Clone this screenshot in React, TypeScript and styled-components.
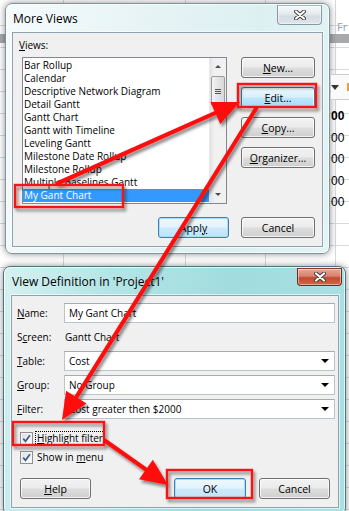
import React from 'react';
import styled, { createGlobalStyle, css } from 'styled-components';

const GlobalStyle = createGlobalStyle`
  html, body {
    margin: 0;
    padding: 0;
    background: #fff;
  }
  body {
    font-family: "Open Sans", "Noto Sans", "Liberation Sans", sans-serif;
    font-size: 10px;
    color: #000;
    overflow: hidden;
  }
`;

const gridLine = '#d6d9dd';

const Page = styled.div`
  position: relative;
  width: 349px;
  height: 511px;
  overflow: hidden;
  background:
    linear-gradient(#a7a9ab, #a7a9ab) 0 34px / 100% 9px no-repeat,
    linear-gradient(${gridLine}, ${gridLine}) 63px 0 / 1px 100% no-repeat,
    linear-gradient(${gridLine}, ${gridLine}) 185px 0 / 1px 100% no-repeat,
    linear-gradient(${gridLine}, ${gridLine}) 265px 0 / 1px 100% no-repeat,
    linear-gradient(${gridLine}, ${gridLine}) 335px 0 / 1px 100% no-repeat,
    repeating-linear-gradient(to bottom, transparent 0 21px, ${gridLine} 21px 22px) 0 4px / 100% 100%,
    #fff;
`;

const TopRow = styled.div`
  display: flex;
  align-items: flex-start;
  padding: 3px 0 0 5px;
`;

const SheetEdge = styled.div`
  flex: 1;
  display: flex;
  flex-direction: column;
  padding-left: 1px;
`;

const SheetHead = styled.div`
  height: 31px;
  display: flex;
  align-items: flex-end;
  padding-left: 6px;
  color: #8ea0b8;
  font-size: 11px;
  box-sizing: border-box;
`;

const SheetGap = styled.div<{ $h: number }>`
  height: ${p => p.$h}px;
`;

const SheetHeader = styled.div`
  height: 26px;
  border-top: 1px solid #c9ccd0;
  border-bottom: 1px solid #c9ccd0;
  background: #fafafa;
  display: flex;
  align-items: center;
  box-sizing: border-box;
  gap: 8px;
`;

const HeaderArrow = styled.span`
  width: 0;
  height: 0;
  border-left: 4px solid transparent;
  border-right: 4px solid transparent;
  border-top: 5px solid #333;
`;

const HeaderMark = styled.span`
  width: 2px;
  height: 8px;
  background: #e8a040;
`;

const SheetCell = styled.div<{ $bold?: boolean }>`
  height: 21.5px;
  line-height: 21.5px;
  font-size: 12px;
  font-weight: ${p => (p.$bold ? 700 : 400)};
  color: #000;
  font-family: "Liberation Sans", sans-serif;
`;

const Window = styled.div<{ $active?: boolean; $width: number; $pad: string }>`
  width: ${p => p.$width}px;
  box-sizing: border-box;
  border: 1px solid ${p => (p.$active ? '#4f7380' : '#7d939e')};
  border-radius: 7px;
  padding: ${p => p.$pad};
  box-shadow: 0 0 7px rgba(0, 0, 0, 0.45), inset 0 0 0 1px rgba(255, 255, 255, 0.7);
  background: ${p =>
    p.$active
      ? 'linear-gradient(100deg, #d6f1f1 0%, #b4e5e6 28%, #a2dcdf 60%, #a9e1e3 100%)'
      : 'linear-gradient(100deg, #f6fbfc 0%, #e8f4f6 35%, #dcf0f2 70%, #e4f3f5 100%)'};
`;

const Dialog2Wrap = styled.div`
  padding: 12px 0 0 3px;
`;

const TitleBar = styled.div`
  height: 28px;
  display: flex;
  justify-content: space-between;
  align-items: flex-start;
`;

const Title = styled.div`
  font-size: 12px;
  margin-top: 6px;
  margin-left: 1px;
  color: #000;
  white-space: nowrap;
`;

const CloseButton = styled.div<{ $red?: boolean; $right: number; $h: number }>`
  width: 45px;
  height: ${p => p.$h}px;
  margin-top: 1px;
  margin-right: ${p => p.$right}px;
  box-sizing: border-box;
  border-radius: 0 0 4px 4px;
  display: flex;
  align-items: center;
  justify-content: center;
  border: 1px solid ${p => (p.$red ? '#6a2b20' : '#8a98a3')};
  border-top-color: ${p => (p.$red ? '#8a3a2a' : '#a8b4bc')};
  box-shadow: inset 0 0 0 1px rgba(255, 255, 255, 0.45);
  background: ${p =>
    p.$red
      ? 'linear-gradient(to bottom, #e6a897 0%, #d7806b 45%, #c24a32 55%, #d0654b 100%)'
      : 'linear-gradient(to bottom, #f6f9fa 0%, #e4eaed 45%, #d4dde2 55%, #dde5ea 100%)'};
`;

const Panel = styled.div<{ $pad: string }>`
  background: #f0f0f0;
  border: 1px solid #8fa2ae;
  box-shadow: 0 0 0 1px rgba(255, 255, 255, 0.6);
  padding: ${p => p.$pad};
  display: flex;
  flex-direction: column;
`;

const U = styled.span`
  text-decoration: underline;
  text-underline-offset: 1px;
`;

const FieldLabel = styled.div`
  height: 14px;
  line-height: 14px;
  margin-bottom: 5px;
`;

const MainRow = styled.div`
  display: flex;
  align-items: flex-start;
`;

const ListBox = styled.div`
  margin-left: 3px;
  width: 205px;
  height: 147px;
  box-sizing: border-box;
  border: 1px solid #828790;
  background: #fff;
  display: flex;
`;

const ListItems = styled.div`
  flex: 1;
  padding-top: 1px;
  overflow: hidden;
`;

const ListItem = styled.div<{ $selected?: boolean }>`
  height: 13px;
  line-height: 13px;
  padding-left: 1px;
  white-space: nowrap;
  background: ${p => (p.$selected ? '#3399ff' : 'transparent')};
  color: ${p => (p.$selected ? '#fff' : '#000')};
`;

const ScrollBar = styled.div`
  width: 16px;
  display: flex;
  flex-direction: column;
  background: linear-gradient(to right, #e3e3e3, #f1f1f1 30%, #f1f1f1);
  border-left: 1px solid #e8e8e8;
`;

const ScrollArrow = styled.div`
  height: 17px;
  display: flex;
  align-items: center;
  justify-content: center;
`;

const ArrowUp = styled.span`
  width: 0;
  height: 0;
  border-left: 3px solid transparent;
  border-right: 3px solid transparent;
  border-bottom: 3px solid #4d4d4d;
`;

const ArrowDown = styled.span`
  width: 0;
  height: 0;
  border-left: 3px solid transparent;
  border-right: 3px solid transparent;
  border-top: 3px solid #4d4d4d;
`;

const ScrollThumb = styled.div`
  margin: 1px 1px 0;
  height: 30px;
  box-sizing: border-box;
  border: 1px solid #9a9a9a;
  border-radius: 2px;
  background: linear-gradient(to right, #f3f3f3, #e4e4e4 50%, #d8d8d8);
  display: flex;
  flex-direction: column;
  align-items: center;
  justify-content: center;
  gap: 1px;
`;

const Grip = styled.span`
  width: 6px;
  height: 1px;
  background: #555;
`;

const ScrollTrack = styled.div`
  flex: 1;
`;

const ButtonColumn = styled.div`
  margin-left: 14px;
  width: 74px;
  display: flex;
  flex-direction: column;
  gap: 9px;
`;

const Button = styled.div<{ $blue?: 'hover' | 'default'; $w?: number; $ml?: number }>`
  box-sizing: border-box;
  height: 21px;
  width: ${p => (p.$w ? `${p.$w}px` : '100%')};
  margin-left: ${p => p.$ml ?? 0}px;
  border: 1px solid #707070;
  border-radius: 3px;
  display: flex;
  align-items: center;
  justify-content: center;
  font-size: 10.5px;
  box-shadow: inset 0 0 0 1px rgba(255, 255, 255, 0.75);
  background: linear-gradient(to bottom, #f2f2f2 0%, #ebebeb 48%, #dddddd 52%, #cfcfcf 100%);
  ${p =>
    p.$blue === 'hover' &&
    css`
      border-color: #3c7fb1;
      background: linear-gradient(to bottom, #eaf6fd 0%, #d9f0fc 48%, #bee6fd 52%, #a7d9f5 100%);
    `}
  ${p =>
    p.$blue === 'default' &&
    css`
      border-color: #3c7fb1;
      box-shadow: inset 0 0 0 1px #a9dcf6;
      background: linear-gradient(to bottom, #eef8fd 0%, #e2f3fc 48%, #cdeafb 52%, #c0e3f7 100%);
    `}
`;

const Footer = styled.div<{ $gap: number; $top: number }>`
  display: flex;
  justify-content: flex-end;
  gap: ${p => p.$gap}px;
  margin-top: ${p => p.$top}px;
`;

const FormGrid = styled.div`
  display: grid;
  grid-template-columns: 52px 1fr;
  row-gap: 4px;
  align-items: center;
`;

const FormLabel = styled.div`
  height: 20px;
  line-height: 20px;
  padding-left: 5px;
`;

const fieldBox = css`
  height: 20px;
  box-sizing: border-box;
  background: #fff;
  border: 1px solid #bcc3cb;
  border-top-color: #a3abb4;
  display: flex;
  align-items: center;
  padding-left: 4px;
`;

const TextBox = styled.div`
  ${fieldBox}
`;

const ComboBox = styled.div`
  ${fieldBox}
  justify-content: space-between;
  padding-right: 5px;
`;

const ComboArrow = styled.span`
  width: 0;
  height: 0;
  border-left: 4px solid transparent;
  border-right: 4px solid transparent;
  border-top: 4px solid #000;
`;

const PlainValue = styled.div`
  height: 20px;
  line-height: 20px;
  padding-left: 1px;
`;

const Checks = styled.div`
  margin-top: 10px;
  padding-left: 8px;
  display: flex;
  flex-direction: column;
`;

const CheckRow = styled.div`
  height: 19px;
  display: flex;
  align-items: center;
  gap: 3px;
`;

const CheckBox = styled.span`
  width: 13px;
  height: 13px;
  box-sizing: border-box;
  border: 1px solid #8e8f8f;
  background: linear-gradient(135deg, #dcdcdc, #f6f6f6 70%, #fff);
  box-shadow: inset 0 0 0 1px #f4f4f4;
  display: flex;
  align-items: center;
  justify-content: center;
`;

const CheckLabel = styled.span<{ $focused?: boolean }>`
  padding: 0 1px;
  line-height: 13px;
  outline: ${p => (p.$focused ? '1px dotted #000' : 'none')};
`;

const DialogButtons = styled.div`
  display: flex;
  align-items: center;
  margin-top: 11px;
  padding: 0 5px 0 8px;
`;

const Spacer = styled.div`
  flex: 1;
`;

const Overlay = styled.svg`
  position: absolute;
  left: 0;
  top: 0;
  pointer-events: none;
`;

const views = [
  'Bar Rollup',
  'Calendar',
  'Descriptive Network Diagram',
  'Detail Gantt',
  'Gantt Chart',
  'Gantt with Timeline',
  'Leveling Gantt',
  'Milestone Date Rollup',
  'Milestone Rollup',
  'Multiple Baselines Gantt',
  'My Gant Chart',
];

const CloseGlyph = () => (
  <svg width="12" height="10" viewBox="0 0 12 10">
    <path d="M2 1.5 L10 8.5 M10 1.5 L2 8.5" stroke="#3a3a3a" strokeWidth="4" strokeLinecap="round" />
    <path d="M2 1.5 L10 8.5 M10 1.5 L2 8.5" stroke="#fff" strokeWidth="2.2" strokeLinecap="round" />
  </svg>
);

const CheckMark = () => (
  <svg width="9" height="9" viewBox="0 0 9 9">
    <path d="M1.2 4.6 L3.5 7.3 L7.9 1.2" fill="none" stroke="#3f5c98" strokeWidth="1.7" />
  </svg>
);

// arrow from tail to tip with a filled head
function arrowParts(x1: number, y1: number, x2: number, y2: number, len = 27, half = 12) {
  const dx = x2 - x1;
  const dy = y2 - y1;
  const d = Math.hypot(dx, dy);
  const ux = dx / d;
  const uy = dy / d;
  const bx = x2 - ux * len;
  const by = y2 - uy * len;
  const head = `${x2},${y2} ${bx - uy * half},${by + ux * half} ${bx + uy * half},${by - ux * half}`;
  return { line: { x1, y1, x2: bx + ux * 2, y2: by + uy * 2 }, head };
}

const arrows = [
  arrowParts(56, 184, 240, 102),
  arrowParts(257, 107, 62, 420),
  arrowParts(104, 440, 168, 485),
];

const boxes = [
  { x: 238, y: 84, w: 78, h: 23 },
  { x: 15, y: 185, w: 108, h: 22 },
  { x: 13, y: 422, w: 91, h: 23 },
  { x: 167, y: 470, w: 85, h: 28 },
];

const App: React.FC = () => {
  return (
    <>
      <GlobalStyle />
      <Page>
        <TopRow>
          <Window $width={325} $pad="0 6px 6px">
            <TitleBar>
              <Title>More Views</Title>
              <CloseButton $right={1} $h={20}>
                <CloseGlyph />
              </CloseButton>
            </TitleBar>
            <Panel $pad="5px 7px 8px 6px">
              <FieldLabel>
                <U>V</U>iews:
              </FieldLabel>
              <MainRow>
                <ListBox>
                  <ListItems>
                    {views.map(v => (
                      <ListItem key={v} $selected={v === 'My Gant Chart'}>
                        {v}
                      </ListItem>
                    ))}
                  </ListItems>
                  <ScrollBar>
                    <ScrollArrow>
                      <ArrowUp />
                    </ScrollArrow>
                    <ScrollThumb>
                      <Grip />
                      <Grip />
                      <Grip />
                    </ScrollThumb>
                    <ScrollTrack />
                    <ScrollArrow>
                      <ArrowDown />
                    </ScrollArrow>
                  </ScrollBar>
                </ListBox>
                <ButtonColumn>
                  <Button>
                    <U>N</U>ew...
                  </Button>
                  <Button $blue="hover">
                    <U>E</U>dit...
                  </Button>
                  <Button>
                    <U>C</U>opy...
                  </Button>
                  <Button>
                    <U>O</U>rganizer...
                  </Button>
                </ButtonColumn>
              </MainRow>
              <Footer $gap={12} $top={13}>
                <Button $blue="default" $w={71}>
                  Appl<U>y</U>
                </Button>
                <Button $w={74}>Cancel</Button>
              </Footer>
            </Panel>
          </Window>
          <SheetEdge>
            <SheetHead>Fr</SheetHead>
            <SheetGap $h={40} />
            <SheetHeader>
              <HeaderArrow />
              <HeaderMark />
            </SheetHeader>
            <SheetGap $h={6} />
            <SheetCell $bold>00</SheetCell>
            <SheetCell>00</SheetCell>
            <SheetCell>00</SheetCell>
            <SheetCell>00</SheetCell>
            <SheetCell>00</SheetCell>
          </SheetEdge>
        </TopRow>

        <Dialog2Wrap>
          <Window $active $width={343} $pad="0 6px 6px 7px">
            <TitleBar>
              <Title>View Definition in 'Project1'</Title>
              <CloseButton $red $right={-3} $h={18}>
                <CloseGlyph />
              </CloseButton>
            </TitleBar>
            <Panel $pad="7px 3px 8px 0">
              <FormGrid>
                <FormLabel>
                  <U>N</U>ame:
                </FormLabel>
                <TextBox>My Gant Chart</TextBox>
                <FormLabel>
                  S<U>c</U>reen:
                </FormLabel>
                <PlainValue>Gantt Chart</PlainValue>
                <FormLabel>
                  <U>T</U>able:
                </FormLabel>
                <ComboBox>
                  Cost
                  <ComboArrow />
                </ComboBox>
                <FormLabel>
                  <U>G</U>roup:
                </FormLabel>
                <ComboBox>
                  No Group
                  <ComboArrow />
                </ComboBox>
                <FormLabel>
                  <U>F</U>ilter:
                </FormLabel>
                <ComboBox>
                  Cost greater then $2000
                  <ComboArrow />
                </ComboBox>
              </FormGrid>
              <Checks>
                <CheckRow>
                  <CheckBox>
                    <CheckMark />
                  </CheckBox>
                  <CheckLabel $focused>
                    <U>H</U>ighlight filter
                  </CheckLabel>
                </CheckRow>
                <CheckRow>
                  <CheckBox>
                    <CheckMark />
                  </CheckBox>
                  <CheckLabel>
                    Show in <U>m</U>enu
                  </CheckLabel>
                </CheckRow>
              </Checks>
              <DialogButtons>
                <Button $w={71}>
                  <U>H</U>elp
                </Button>
                <Spacer />
                <Button $blue="default" $w={72}>
                  OK
                </Button>
                <Button $w={71} $ml={13}>
                  Cancel
                </Button>
              </DialogButtons>
            </Panel>
          </Window>
        </Dialog2Wrap>

        <Overlay width={349} height={511} viewBox="0 0 349 511">
          <defs>
            <filter id="shadow" x="-20%" y="-20%" width="140%" height="140%">
              <feDropShadow dx="2" dy="3" stdDeviation="1.8" floodColor="#000" floodOpacity="0.45" />
            </filter>
          </defs>
          <g filter="url(#shadow)">
            {boxes.map((b, i) => (
              <rect key={i} x={b.x} y={b.y} width={b.w} height={b.h} fill="none" stroke="#f21414" strokeWidth={2.4} />
            ))}
            {arrows.map((a, i) => (
              <g key={i}>
                <line {...a.line} stroke="#ff0a0a" strokeWidth={4.2} />
                <polygon points={a.head} fill="#ff0a0a" />
              </g>
            ))}
          </g>
        </Overlay>
      </Page>
    </>
  );
};

export default App;
